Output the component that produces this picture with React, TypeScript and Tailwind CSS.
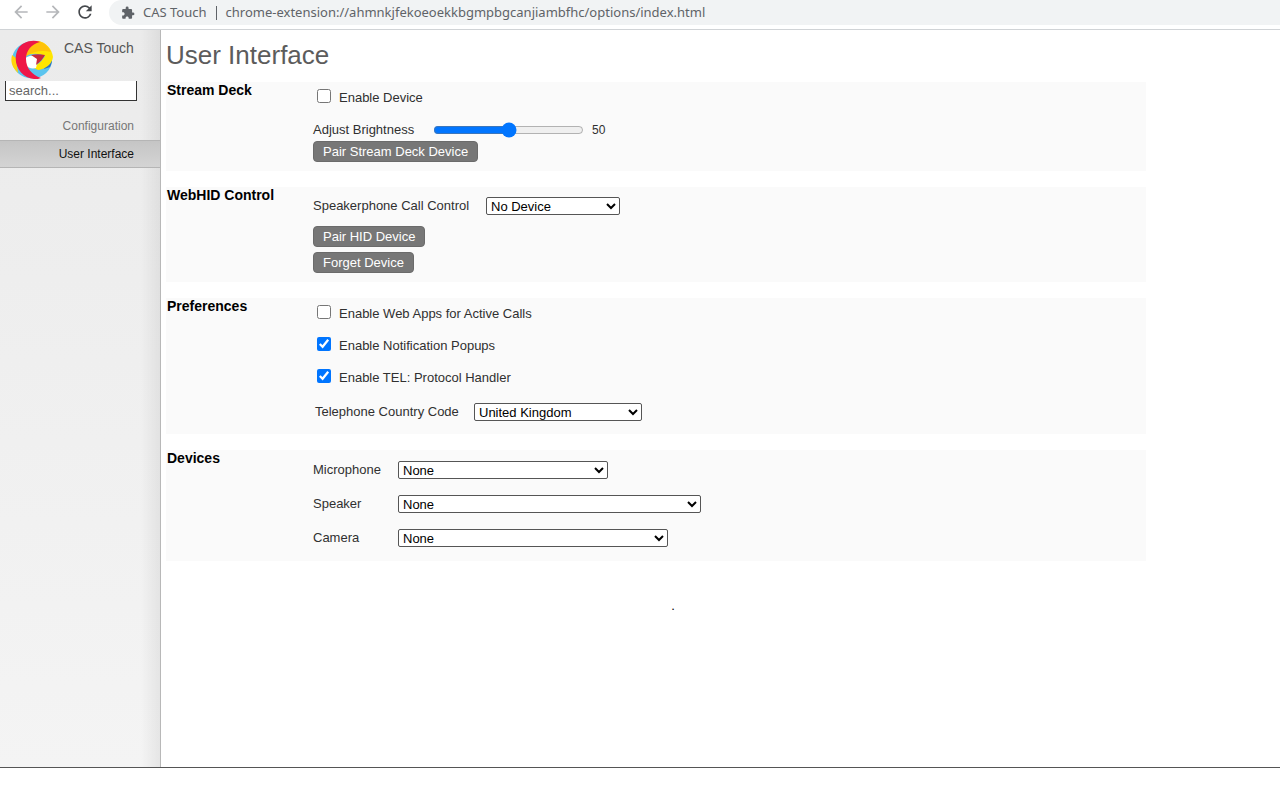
import { useState } from "react";
import type { ReactNode } from "react";
import { MdArrowBack, MdArrowForward, MdRefresh, MdExtension } from "react-icons/md";

function Section({ title, className, children }: { title: string; className: string; children: ReactNode }) {
  return (
    <section className="flex bg-[#fafafa]">
      <h2 className="w-[147px] shrink-0 pl-px text-[14px] font-bold leading-4 text-black">{title}</h2>
      <div className={`flex flex-1 flex-col items-start ${className}`}>{children}</div>
    </section>
  );
}

function Check({ id, label, checked = false }: { id: string; label: string; checked?: boolean }) {
  return (
    <div className="flex h-8 items-center gap-2 pl-1">
      <input id={id} type="checkbox" defaultChecked={checked} className="mb-1 h-[14px] w-[14px] accent-[#0075ff]" />
      <label htmlFor={id}>{label}</label>
    </div>
  );
}

function PairButton({ children }: { children: ReactNode }) {
  return (
    <button type="button" className="h-[21px] rounded-[4px] border border-[#6b6b6b] bg-[#777] px-[9px] leading-[19px] text-white">
      {children}
    </button>
  );
}

function Select({ id, value, className }: { id: string; value: string; className: string }) {
  return (
    <select id={id} className={`h-[18px] rounded-[2px] border border-[#555] bg-white text-black ${className}`}>
      <option>{value}</option>
    </select>
  );
}

function Logo() {
  return (
    <svg viewBox="0 0 42 40" className="h-10 w-[42px]" aria-hidden="true">
      <ellipse cx="21" cy="20" rx="20" ry="18.5" fill="#5bc4ee" />
      <path d="M1 15c-2 8 1 13 6 18L5 18Z" fill="#ffd40a" />
      <path d="M40 14c2 4 1 9-1 13l-6 2Z" fill="#2f6fc0" />
      <path d="M14 16C15 7 20 1 27 1c8 1 14 8 15 16-1 7-7 12-15 13l-6-3c6-2 10-6 13-11-6-3-13-3-20 0Z" fill="#ffe600" />
      <path d="M14 17C15 8 20 1 27 1c6 1 11 6 13 11-9-2-18-1-26 5Z" fill="#ffc20a" />
      <path d="M14 18c4-2 7-3 10-2l3 4-2 8c-4 1-8 0-11-3Z" fill="#fff" />
      <path d="M20 15c5-1 9-1 14 0-2 4-5 7-9 10l1-6Z" fill="#c92b3c" />
      <path d="M29 2C21-1 11 2 7 9c-7 14 3 29 16 30 3 0 5 0 7-1-9-3-15-10-15-19C15 11 20 4 29 2Z" fill="#ee1647" />
    </svg>
  );
}

function BrowserBar() {
  return (
    <header className="flex h-[30px] shrink-0 items-start border-b border-[#d0d3d6] bg-white text-[#5f6368]">
      <div className="flex h-6 shrink-0 items-center gap-3 pl-[11px]">
        <button type="button" aria-label="Back" className="text-[#b5b7ba]"><MdArrowBack size={20} /></button>
        <button type="button" aria-label="Forward" className="text-[#b5b7ba]"><MdArrowForward size={20} /></button>
        <button type="button" aria-label="Reload" className="text-[#46494d]"><MdRefresh size={20} /></button>
      </div>
      <div className="ml-[14px] flex h-[25px] flex-1 items-center rounded-l-full bg-[#f1f3f4] pl-3 font-['Noto_Sans',sans-serif] text-[13px]">
        <MdExtension size={14} className="mr-2 shrink-0" />
        <span className="shrink-0">CAS Touch</span>
        <span className="mx-[9px] h-[14px] w-px shrink-0 bg-[#5f6368]" />
        <span className="whitespace-nowrap">chrome-extension://ahmnkjfekoeoekkbgmpbgcanjiambfhc/options/index.html</span>
      </div>
    </header>
  );
}

export default function App() {
  const [brightness, setBrightness] = useState(50);
  return (
    <div className="flex min-h-screen flex-col bg-white pb-8 font-['Liberation_Sans',Arial,sans-serif] text-[13px] text-[#303030]">
      <BrowserBar />
      <div className="flex flex-1 border-b border-[#555]">
        <aside className="flex w-[161px] shrink-0 flex-col border-r border-[#b8b8b8] bg-linear-to-b from-[#ebebeb] to-[#f4f4f4]">
          <div className="flex flex-1 flex-col bg-linear-to-r from-transparent from-88% to-black/6">
            <div className="flex h-[51px] items-start gap-[11px] pl-[11px] pt-[10px]">
              <Logo />
              <span className="text-[14px] leading-4 text-[#555]">CAS Touch</span>
            </div>
            <input
              type="text"
              aria-label="Search"
              placeholder="search..."
              className="ml-[5px] h-5 w-[132px] border border-t-0 border-[#333] bg-white pl-[3px] placeholder:text-[#666]"
            />
            <nav className="mt-3 flex flex-col text-right text-[12px]">
              <a href="#configuration" className="h-[27px] pr-[26px] leading-[27px] text-[#777]">Configuration</a>
              <a href="#interface" aria-current="page" className="h-7 border-y border-[#b5b5b5] bg-linear-to-b from-[#c5c5c5] to-[#d4d4d4] pr-[26px] leading-[26px] text-[#111]">User Interface</a>
            </nav>
          </div>
        </aside>
        <main className="min-w-0 flex-1 pl-[5px] pr-4">
          <h1 className="h-[52px] pt-[10px] text-[26px] leading-[30px] text-[#5c5c5c]">User Interface</h1>
          <div className="flex max-w-[980px] flex-col gap-4">
            <Section title="Stream Deck" className="pb-[9px]">
              <Check id="device" label="Enable Device" />
              <div className="mt-[5px] flex h-[22px] items-center">
                <label htmlFor="brightness" className="w-[120px]">Adjust Brightness</label>
                <input
                  id="brightness"
                  type="range"
                  min={0}
                  max={100}
                  value={brightness}
                  onChange={(event) => setBrightness(Number(event.target.value))}
                  className="w-[151px] accent-[#0075ff]"
                />
                <output htmlFor="brightness" className="pl-2 text-[12px]">{brightness}</output>
              </div>
              <PairButton>Pair Stream Deck Device</PairButton>
            </Section>
            <Section title="WebHID Control" className="gap-[5px] pb-[9px] pt-[9px]">
              <div className="mb-[6px] flex h-[19px] items-center">
                <label htmlFor="control" className="w-[173px]">Speakerphone Call Control</label>
                <Select id="control" value="No Device" className="w-[134px]" />
              </div>
              <PairButton>Pair HID Device</PairButton>
              <PairButton>Forget Device</PairButton>
            </Section>
            <Section title="Preferences" className="pb-[13px]">
              <Check id="apps" label="Enable Web Apps for Active Calls" />
              <Check id="popups" label="Enable Notification Popups" checked />
              <Check id="tel" label="Enable TEL: Protocol Handler" checked />
              <div className="mt-[9px] flex h-[18px] items-center pl-[2px]">
                <label htmlFor="country" className="w-[159px]">Telephone Country Code</label>
                <Select id="country" value="United Kingdom" className="w-[168px]" />
              </div>
            </Section>
            <Section title="Devices" className="pb-[6px] pt-[3px]">
              <div className="flex h-[34px] items-center">
                <label htmlFor="microphone" className="w-[85px]">Microphone</label>
                <Select id="microphone" value="None" className="w-[210px]" />
              </div>
              <div className="flex h-[34px] items-center">
                <label htmlFor="speaker" className="w-[85px]">Speaker</label>
                <Select id="speaker" value="None" className="w-[303px]" />
              </div>
              <div className="flex h-[34px] items-center">
                <label htmlFor="camera" className="w-[85px]">Camera</label>
                <Select id="camera" value="None" className="w-[270px]" />
              </div>
            </Section>
          </div>
          <p className="max-w-[1014px] pt-[37px] text-center leading-4 text-black">.</p>
        </main>
      </div>
    </div>
  );
}
